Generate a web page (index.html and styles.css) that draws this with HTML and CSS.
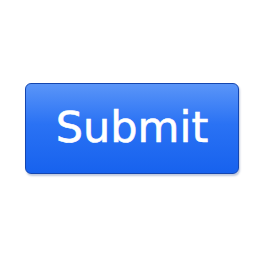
FILE: index.html
```html
<!DOCTYPE html>
<html lang="en">
<head>
  <meta charset="UTF-8" />
  <title>Submit</title>
  <link rel="stylesheet" href="styles.css">
</head>
<body>
  <div class="wrap">
    <button type="submit" class="submit-btn">Submit</button>
  </div>
</body>
</html>
```

FILE: styles.css
```css
* { box-sizing: border-box; margin: 0; padding: 0; }
body {
  background: #ffffff;
  width: 256px;
  height: 256px;
  font-family: "DejaVu Sans", Verdana, sans-serif;
}
.wrap {
  padding: 83px 0 0 25px;
}
.submit-btn {
  width: 214px;
  height: 91px;
  padding-bottom: 2px;
  border: 1px solid #1446b0;
  border-radius: 6px;
  background: linear-gradient(#5a95f8, #2a72f4 45%, #1762ee);
  box-shadow: 1px 2px 2px rgba(0, 40, 120, 0.25);
  color: #ffffff;
  font-family: "DejaVu Sans", Verdana, sans-serif;
  font-size: 43px;
  line-height: 1;
  -webkit-text-stroke: 0.6px #ffffff;
  cursor: pointer;
}
```
